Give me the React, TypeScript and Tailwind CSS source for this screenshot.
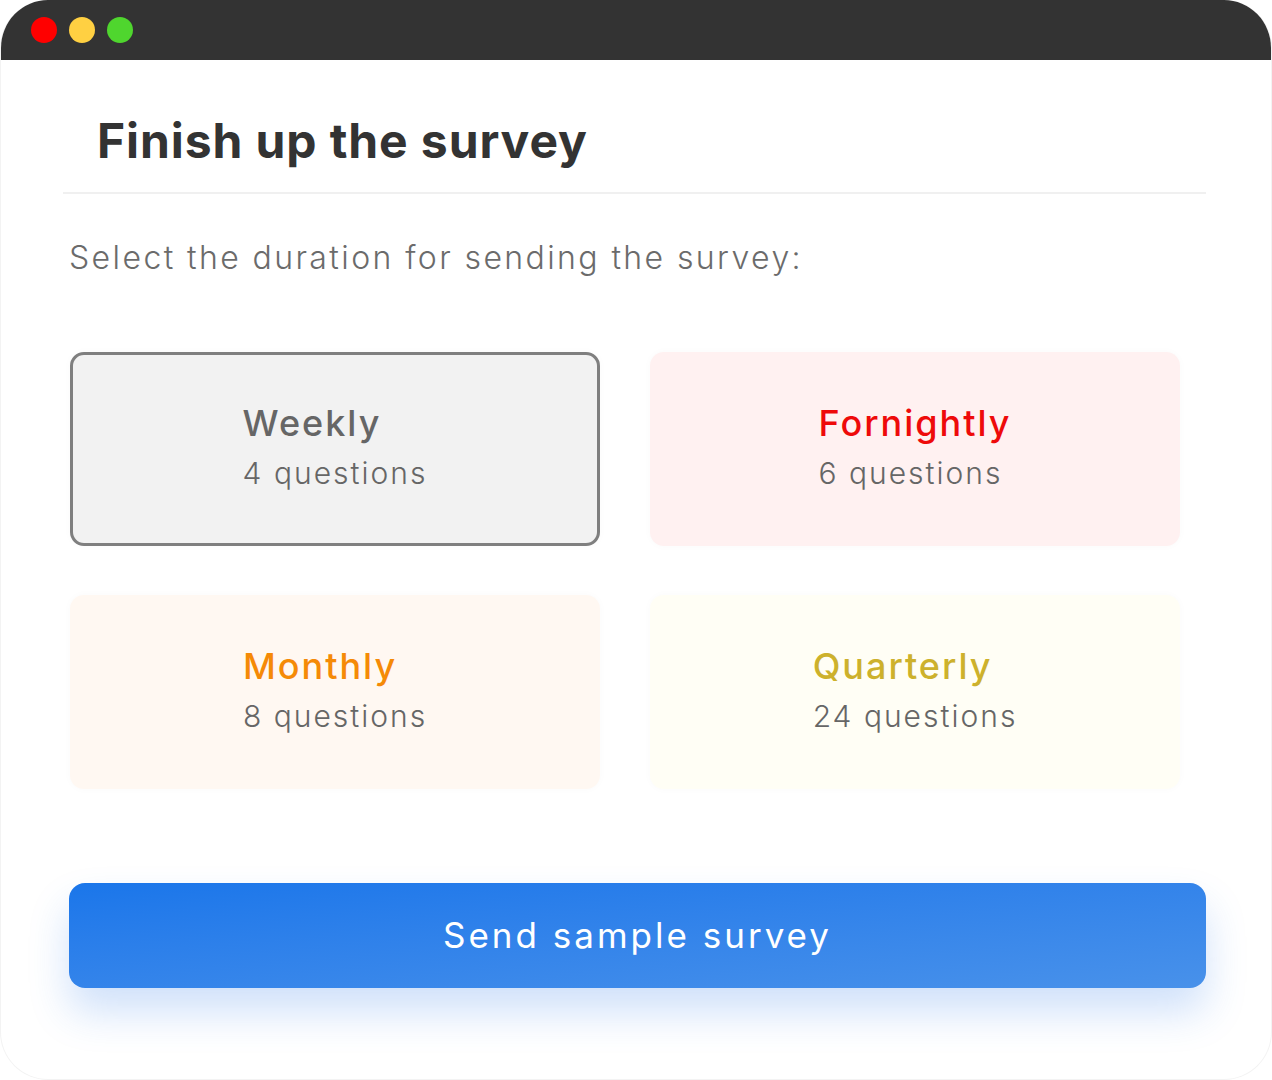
const font = "font-['Inter','Liberation_Sans',sans-serif]";

const options = [
  { name: 'Weekly', count: '4 questions', color: 'text-[#666666]', card: 'bg-[#f2f2f2] border-[3px] border-[#7f7f7f]' },
  { name: 'Fornightly', count: '6 questions', color: 'text-[#ee0a0a]', card: 'bg-[#fff1f1]' },
  { name: 'Monthly', count: '8 questions', color: 'text-[#f58a07]', card: 'bg-[#fff8f2]' },
  { name: 'Quarterly', count: '24 questions', color: 'text-[#cdb12c]', card: 'bg-[#fffef5]' },
];

function OptionCard({ name, count, color, card }: (typeof options)[number]) {
  return (
    <div
      className={`h-[194px] rounded-[14px] flex items-center justify-center shadow-[0_0_8px_rgba(0,0,0,0.025)] ${card}`}
    >
      <div className="flex flex-col items-start pb-[2px]">
        <span className={`text-[36px] font-medium leading-[50px] tracking-[2px] ${color}`}>{name}</span>
        <span className="text-[30px] font-light leading-[50px] tracking-[2px] text-[#666666]">{count}</span>
      </div>
    </div>
  );
}

export default function App() {
  return (
    <div className={`w-[1272px] h-[1080px] bg-white ${font}`}>
      <div className="h-full rounded-[48px] border-x border-b border-[#f3f3f3] overflow-hidden flex flex-col">
        <div className="h-[60px] shrink-0 bg-[#333333] flex items-center gap-[12px] pl-[30px]">
          <span className="w-[26px] h-[26px] rounded-full bg-[#ff0000]" />
          <span className="w-[26px] h-[26px] rounded-full bg-[#ffd042]" />
          <span className="w-[26px] h-[26px] rounded-full bg-[#4fd62e]" />
        </div>

        <div className="pl-[62px] pr-[65px]">
          <div className="h-[134px] flex items-center pl-[34px] pt-[30px] border-b-2 border-[#f0f0f0]">
            <h1 className="text-[48px] font-bold text-[#333333] tracking-[0.9px]">Finish up the survey</h1>
          </div>

          <p className="mt-[42px] pl-[6px] text-[32px] font-light text-[#6b6b6b] leading-[44px] tracking-[2.4px]">
            Select the duration for sending the survey:
          </p>

          <div className="mt-[72px] ml-[7px] grid grid-cols-[530px_530px] gap-x-[50px] gap-y-[49px]">
            {options.map((o) => (
              <OptionCard key={o.name} {...o} />
            ))}
          </div>

          <button className="mt-[94px] ml-[6px] w-[1137px] h-[105px] rounded-[16px] bg-gradient-to-br from-[#1a76ea] to-[#4891ea] text-white text-[35px] font-normal tracking-[3px] shadow-[0_24px_40px_rgba(40,120,230,0.22)]">
            Send sample survey
          </button>
        </div>
      </div>
    </div>
  );
}
